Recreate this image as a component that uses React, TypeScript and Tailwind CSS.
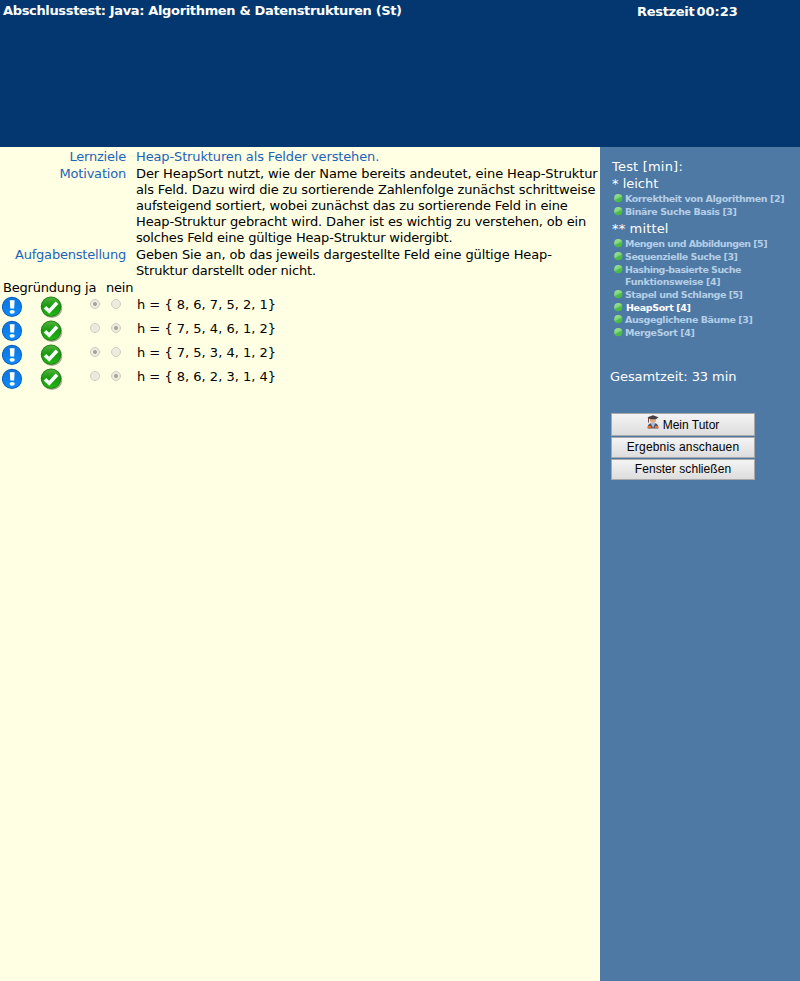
import React from 'react';

function InfoIcon() {
  return (
    <svg width="21" height="21" viewBox="0 0 21 21" className="block">
      <defs>
        <linearGradient id="info" x1="0" y1="0" x2="0" y2="1">
          <stop offset="0" stopColor="#1173d8" />
          <stop offset="1" stopColor="#0a8cff" />
        </linearGradient>
      </defs>
      <circle cx="10" cy="10.8" r="10.1" fill="#0a5dbd" />
      <circle cx="10" cy="10.8" r="9.2" fill="url(#info)" />
      <path d="M7.8 4.3h4.8l-.5 8.2H8.3z" fill="#fff" />
      <ellipse cx="10.2" cy="15.8" rx="2.6" ry="1.9" fill="#fff" />
    </svg>
  );
}

function CheckIcon() {
  return (
    <svg width="24" height="23" viewBox="0 0 24 23" className="block">
      <defs>
        <linearGradient id="check" x1="0" y1="0" x2="0" y2="1">
          <stop offset="0" stopColor="#52b23c" />
          <stop offset=".5" stopColor="#149a0c" />
          <stop offset="1" stopColor="#22b712" />
        </linearGradient>
      </defs>
      <circle cx="12" cy="11.7" r="10.3" fill="#777a60" opacity=".65" />
      <circle cx="11" cy="10.6" r="10.2" fill="#147a10" />
      <circle cx="11" cy="10.6" r="9.4" fill="url(#check)" />
      <path d="M4.9 11.2l4.3 4 7.8-8.4" fill="none" stroke="#fff" strokeWidth="3.6" />
    </svg>
  );
}

function Radio({ checked }: { checked: boolean }) {
  return (
    <span className="flex size-[10px] items-center justify-center rounded-full border border-[#cfcfc0] bg-[#ebebdf]">
      {checked && <span className="size-1 rounded-full bg-[#a3a39b]" />}
    </span>
  );
}

function Dot() {
  return (
    <svg width="9" height="9" viewBox="0 0 9 9" className="mt-px shrink-0">
      <defs>
        <linearGradient id="dot" x1="0.2" y1="0" x2="0.7" y2="1">
          <stop offset="0" stopColor="#9be293" />
          <stop offset=".45" stopColor="#80d67b" />
          <stop offset=".6" stopColor="#4cbd4c" />
          <stop offset="1" stopColor="#45b94a" />
        </linearGradient>
      </defs>
      <circle cx="4.3" cy="4.2" r="4.1" fill="url(#dot)" />
    </svg>
  );
}

function TutorIcon() {
  return (
    <svg width="12" height="14" viewBox="0 0 12 14" className="-mt-[5px] mr-1">
      <circle cx="6" cy="5" r="3" fill="#e2aa80" />
      <path d="M0.5 2.3L6 .3l5.5 2L9 4.2H3z" fill="#454044" />
      <path d="M1.5 2.5v5" stroke="#6b4440" />
      <path d="M.6 13.5c0-4 1.6-5.6 5.4-5.6s5.4 1.6 5.4 5.6z" fill="#59555a" />
      <path d="M3.6 8l2.4 5L8.4 8z" fill="#9dbdea" />
      <path d="M.8 12.2h3.4M7.8 12.2h3.4" stroke="#e0703a" strokeWidth="2.2" />
    </svg>
  );
}

const rows = [
  { text: 'h = { 8, 6, 7, 5, 2, 1}', yes: true },
  { text: 'h = { 7, 5, 4, 6, 1, 2}', yes: false },
  { text: 'h = { 7, 5, 3, 4, 1, 2}', yes: true },
  { text: 'h = { 8, 6, 2, 3, 1, 4}', yes: false },
];

function Item({ children, className }: { children: React.ReactNode; className: string }) {
  return (
    <div className={`flex text-[9.5px] leading-[12px] font-bold ${className}`}>
      <Dot />
      <span className="ml-[2px] whitespace-nowrap">{children}</span>
    </div>
  );
}

const label = 'w-[126px] shrink-0 text-right tracking-[-0.2px] text-[#1d63b8]';

const button =
  'flex w-[144px] items-center justify-center border border-[#a9a9a9] bg-linear-to-b from-[#f4f4f4] to-[#dddddd] font-["Liberation_Sans",Arial,sans-serif] text-[12px] text-black';

export default function App() {
  return (
    <div className="flex h-[981px] w-[800px] flex-col overflow-hidden bg-[#ffffe3] font-['Verdana','DejaVu_Sans',sans-serif] text-[13px] leading-4 text-black">
      <header className="flex h-[147px] bg-[#04376f] text-[13px] font-bold text-white">
        <h1 className="w-[637px] shrink-0 pt-[3px] pl-[3px] tracking-[-0.345px] whitespace-nowrap">Abschlusstest: Java: Algorithmen &amp; Datenstrukturen (St)</h1>
        <div className="flex gap-[2px] pt-[4px]">
          <span className="tracking-[-0.3px]">Restzeit</span>
          <span>00:23</span>
        </div>
      </header>
      <div className="flex flex-1">
        <main className="w-[600px] shrink-0 pt-[2px] whitespace-nowrap">
          <div className="flex h-[17px]">
            <div className={label}>Lernziele</div>
            <div className="ml-[10px] tracking-[-0.13px] text-[#1d63b8]">Heap-Strukturen als Felder verstehen.</div>
          </div>
          <div className="flex h-[81px]">
            <div className={label}>Motivation</div>
            <div className="ml-[10px]">
              <div className="tracking-[-0.1px]">Der HeapSort nutzt, wie der Name bereits andeutet, eine Heap-Struktur</div>
              <div className="tracking-[-0.155px]">als Feld. Dazu wird die zu sortierende Zahlenfolge zunächst schrittweise</div>
              <div className="tracking-[-0.14px]">aufsteigend sortiert, wobei zunächst das zu sortierende Feld in eine</div>
              <div className="tracking-[-0.145px]">Heap-Struktur gebracht wird. Daher ist es wichtig zu verstehen, ob ein</div>
              <div className="tracking-[-0.18px]">solches Feld eine gültige Heap-Struktur widergibt.</div>
            </div>
          </div>
          <div className="flex h-[33px]">
            <div className={label}>Aufgabenstellung</div>
            <div className="ml-[10px]">
              <div className="tracking-[-0.12px]">Geben Sie an, ob das jeweils dargestellte Feld eine gültige Heap-</div>
              <div className="tracking-[-0.18px]">Struktur darstellt oder nicht.</div>
            </div>
          </div>
          <div className="flex h-[15px] pl-[3px] tracking-[-0.2px]">
            <span className="w-[82px]">Begründung</span>
            <span className="w-[21px]">ja</span>
            <span>nein</span>
          </div>
          {rows.map((r) => (
            <div key={r.text} className="flex h-6 pl-[2px]">
              <div className="w-[38px] pt-px"><InfoIcon /></div>
              <div className="w-[50px] pt-px"><CheckIcon /></div>
              <div className="w-[21px] pt-[4px]"><Radio checked={r.yes} /></div>
              <div className="w-[26px] pt-[4px]"><Radio checked={!r.yes} /></div>
              <div className="pt-[2px]">{r.text}</div>
            </div>
          ))}
        </main>
        <aside className="w-[200px] shrink-0 bg-[#4e79a4] pt-[12px] pl-[12px] text-white">
          <div className="h-[17px] tracking-[0.2px]">Test [min]:</div>
          <div className="h-[17px]">* leicht</div>
          <div className="pl-[2px] text-[#b4cee6]">
            <Item className="h-[13px] tracking-[-0.43px]">Korrektheit von Algorithmen [2]</Item>
            <Item className="h-[15px] tracking-[-0.42px]">Binäre Suche Basis [3]</Item>
          </div>
          <div className="h-[17px] tracking-[0.15px]">** mittel</div>
          <div className="pl-[2px] text-[#b4cee6]">
            <Item className="h-[13px] tracking-[-0.54px]">Mengen und Abbildungen [5]</Item>
            <Item className="h-[13px] tracking-[-0.46px]">Sequenzielle Suche [3]</Item>
            <Item className="h-[25px] tracking-[-0.5px]"><span className="block tracking-[-0.53px]">Hashing-basierte Suche</span><span className="block tracking-[-0.36px]">Funktionsweise [4]</span></Item>
            <Item className="h-[13px] tracking-[-0.49px]">Stapel und Schlange [5]</Item>
            <Item className="h-[12px] tracking-[-0.36px]"><span className="pl-px text-white">HeapSort [4]</span></Item>
            <Item className="h-[13px] tracking-[-0.42px]">Ausgeglichene Bäume [3]</Item>
            <Item className="h-[13px] tracking-[-0.44px]">MergeSort [4]</Item>
          </div>
          <div className="-ml-[2px] pt-[29px] tracking-[-0.08px]">Gesamtzeit: 33 min</div>
          <div className="-ml-px flex flex-col gap-px pt-[28px]">
            <button className={`h-[23px] ${button}`}><TutorIcon />Mein Tutor</button>
            <button className={`h-[21px] pb-[2px] tracking-[0.18px] ${button}`}>Ergebnis anschauen</button>
            <button className={`h-[21px] pb-[2px] tracking-[0.06px] ${button}`}>Fenster schließen</button>
          </div>
        </aside>
      </div>
    </div>
  );
}
